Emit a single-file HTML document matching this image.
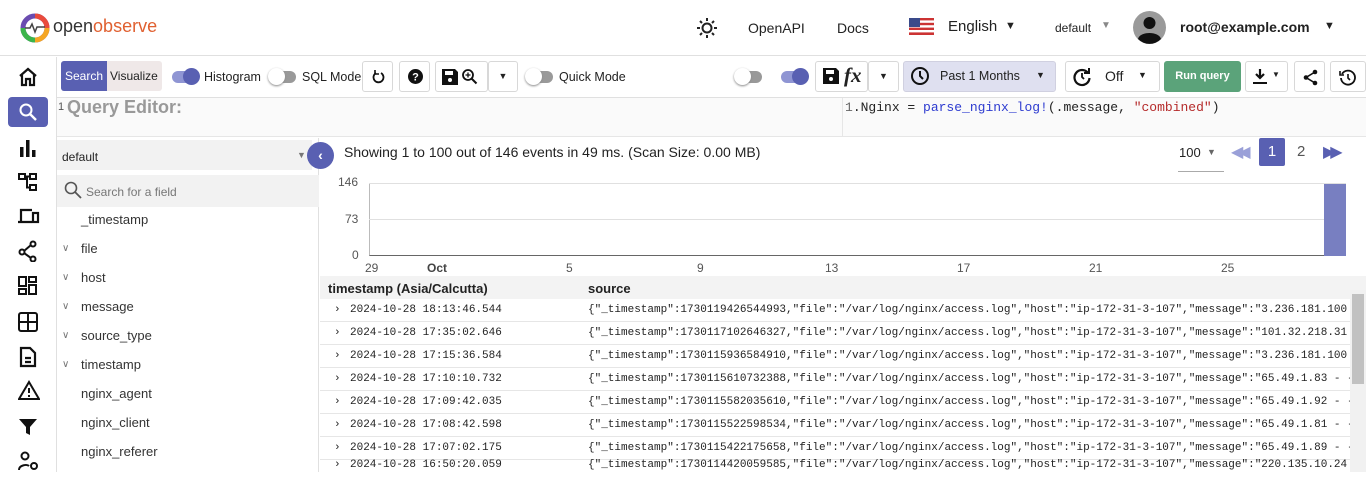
<!DOCTYPE html>
<html><head><meta charset="utf-8"><style>
*{box-sizing:border-box;margin:0;padding:0}
body{width:1366px;height:472px;overflow:hidden;background:#fff;font-family:"Liberation Sans",sans-serif;color:#222;position:relative;font-size:13px}
.abs{position:absolute}
.mono{font-family:"Liberation Mono",monospace}
.btn{position:absolute;top:61px;height:31px;border:1px solid #d8d8d8;border-radius:3px;background:#fff}
.tog{position:absolute;width:26px;height:12px;border-radius:6px}
.knob{position:absolute;width:17px;height:17px;border-radius:50%;top:-3px}
.nav svg{position:absolute;left:18px}
.row{position:absolute;left:320px;width:1030px;height:23px;border-bottom:1px solid #e6e6e6;font-size:11px;font-family:"Liberation Mono",monospace;line-height:22px;color:#222;white-space:nowrap;overflow:hidden}
.row span{position:absolute}
.fld{position:absolute;left:81px;font-size:13px;color:#333}
.chev{position:absolute;left:62px;font-size:10px;color:#777}
</style></head><body>
<div class="abs" style="left:0;top:0;width:1366px;height:56px;border-bottom:1px solid #e0e0e0"></div>
<svg class="abs" style="left:20px;top:13px" width="30" height="30" viewBox="0 0 30 30"><circle cx="15" cy="15" r="12" fill="none" stroke="#6a4cb0" stroke-width="5"/><path d="M15 3 A12 12 0 0 1 27 15" stroke="#e94b3c" stroke-width="5" fill="none"/><path d="M27 15 A12 12 0 0 1 15 27" stroke="#f5a623" stroke-width="5" fill="none"/><path d="M15 27 A12 12 0 0 1 3 15" stroke="#3bb54a" stroke-width="5" fill="none"/><path d="M5 15h5l2-4 3 8 2-5h8" stroke="#444" stroke-width="1.5" fill="none"/></svg>
<div class="abs" style="left:53px;top:16px;font-size:18px;letter-spacing:0px"><span style="color:#333">open</span><span style="color:#e06030">observe</span></div>
<svg class="abs" style="left:696px;top:17px" width="22" height="22" viewBox="0 0 22 22"><circle cx="11" cy="11" r="4.5" fill="none" stroke="#222" stroke-width="2"/><g stroke="#222" stroke-width="2"><path d="M11 1v3M11 18v3M1 11h3M18 11h3M4 4l2 2M16 16l2 2M4 18l2-2M16 6l2-2"/></g></svg>
<div class="abs" style="left:748px;top:20px;font-size:14px">OpenAPI</div>
<div class="abs" style="left:837px;top:20px;font-size:14px">Docs</div>
<svg class="abs" style="left:909px;top:18px" width="25" height="17" viewBox="0 0 25 17"><rect width="25" height="17" fill="#c33"/><g fill="#fff"><rect y="2.4" width="25" height="2.4"/><rect y="7.2" width="25" height="2.4"/><rect y="12" width="25" height="2.4"/></g><rect width="11" height="9" fill="#3a4a8a"/></svg>
<div class="abs" style="left:948px;top:18px;font-size:15px">English</div>
<div class="abs" style="left:1005px;top:20px;font-size:11px">▼</div>
<div class="abs" style="left:1055px;top:21px;font-size:12px">default</div>
<div class="abs" style="left:1101px;top:20px;font-size:10px;color:#888">▼</div>
<svg class="abs" style="left:1133px;top:11px" width="33" height="33" viewBox="0 0 33 33"><circle cx="16.5" cy="16.5" r="16.5" fill="#9a9a9a"/><circle cx="16.5" cy="12" r="6" fill="#111"/><path d="M5 28c2-8 21-8 23 0a16 16 0 0 1-23 0z" fill="#111"/></svg>
<div class="abs" style="left:1180px;top:19px;font-size:14px;font-weight:bold">root@example.com</div>
<div class="abs" style="left:1324px;top:20px;font-size:11px">▼</div>

<div class="abs" style="left:56px;top:57px;width:1px;height:415px;background:#e0e0e0"></div>
<div class="abs" style="left:8px;top:97px;width:40px;height:30px;background:#5960b2;border-radius:4px"></div>
<div class="nav">
<svg style="top:67px" width="20" height="20" viewBox="0 0 20 20"><path d="M2 9L10 2l8 7M4 8v10h4v-6h4v6h4V8" fill="none" stroke="#111" stroke-width="2.2"/></svg>
<svg style="top:102px" width="20" height="20" viewBox="0 0 20 20"><circle cx="8" cy="8" r="5.5" fill="none" stroke="#fff" stroke-width="2"/><path d="M12 12l6 6" stroke="#fff" stroke-width="2.4"/></svg>
<svg style="top:138px" width="20" height="20" viewBox="0 0 20 20"><rect x="2" y="9" width="3.5" height="10" fill="#111"/><rect x="8" y="2" width="3.5" height="17" fill="#111"/><rect x="14" y="12" width="3.5" height="7" fill="#111"/></svg>
<svg style="top:172px" width="20" height="20" viewBox="0 0 20 20"><g fill="none" stroke="#111" stroke-width="2"><rect x="1" y="2" width="6" height="5"/><rect x="12" y="2" width="6" height="5"/><rect x="12" y="13" width="6" height="5"/><path d="M7 4.5h5M9 4.5v11h3"/></g></svg>
<svg style="top:206px" width="22" height="20" viewBox="0 0 22 20"><g fill="none" stroke="#111" stroke-width="2.2"><path d="M3 15V4h11M0 16h14"/><rect x="15" y="7" width="5" height="9"/></g></svg>
<svg style="top:240px" width="20" height="22" viewBox="0 0 20 22"><g fill="none" stroke="#111" stroke-width="2"><circle cx="4" cy="12" r="2.5"/><circle cx="15" cy="4" r="2.5"/><circle cx="15" cy="19" r="2.5"/><path d="M6 11l7-6M6 13l7 5"/></g></svg>
<svg style="top:276px" width="20" height="20" viewBox="0 0 20 20"><g fill="none" stroke="#111" stroke-width="2"><rect x="1" y="1" width="7" height="9"/><rect x="11" y="1" width="7" height="5"/><rect x="1" y="13" width="7" height="5"/><rect x="11" y="9" width="7" height="9"/></g></svg>
<svg style="top:312px" width="20" height="20" viewBox="0 0 20 20"><g fill="none" stroke="#111" stroke-width="2"><rect x="1" y="1" width="18" height="18" rx="2"/><path d="M10 1v18M1 10h18"/></g></svg>
<svg style="top:346px" width="20" height="22" viewBox="0 0 20 22"><g fill="none" stroke="#111" stroke-width="2.2"><path d="M3 2h9l5 5v13H3z"/><path d="M7 12h6M7 16h6"/></g></svg>
<svg style="top:380px" width="22" height="20" viewBox="0 0 22 20"><g fill="none" stroke="#111" stroke-width="2"><path d="M11 2L1 19h20z"/><path d="M11 8v5M11 15v2"/></g></svg>
<svg style="top:417px" width="20" height="20" viewBox="0 0 20 20"><path d="M1 2h18l-7 8v8l-4-2v-6z" fill="#111"/></svg>
<svg style="top:450px" width="22" height="22" viewBox="0 0 22 22"><g fill="none" stroke="#111" stroke-width="2"><circle cx="7" cy="6" r="3.5"/><path d="M1 20c0-5 8-6 10-4"/><circle cx="16" cy="16" r="3"/></g></svg>
</div>

<div class="abs" style="left:57px;top:97px;width:1309px;height:1px;background:#e0e0e0"></div>
<div class="abs" style="left:61px;top:61px;width:101px;height:30px;background:#efe8e8;border-radius:3px"></div>
<div class="abs" style="left:61px;top:61px;width:46px;height:30px;background:#5960b2;border-radius:3px 0 0 3px;color:#fff;font-size:12px;line-height:30px;text-align:center">Search</div>
<div class="abs" style="left:110px;top:69px;font-size:12px">Visualize</div>
<div class="tog" style="left:172px;top:71px;background:#8f95d3"><div class="knob" style="left:11px;background:#5960b2"></div></div>
<div class="abs" style="left:204px;top:70px;font-size:12.5px">Histogram</div>
<div class="tog" style="left:270px;top:71px;background:#999"><div class="knob" style="left:-2px;background:#fff;box-shadow:0 1px 2px #888"></div></div>
<div class="abs" style="left:302px;top:70px;font-size:12.5px">SQL Mode</div>
<div class="btn" style="left:362px;width:31px"><svg style="position:absolute;left:9px;top:8px" width="13" height="14" viewBox="0 0 13 14"><path d="M4 3A5 5 0 1 0 9 3" fill="none" stroke="#111" stroke-width="1.8"/><path d="M3 0v4h4" fill="none" stroke="#111" stroke-width="1.6"/></svg></div>
<div class="btn" style="left:399px;width:31px"><svg style="position:absolute;left:8px;top:7px" width="15" height="15" viewBox="0 0 15 15"><circle cx="7.5" cy="7.5" r="7.5" fill="#111"/><text x="7.5" y="11.5" font-size="11" font-weight="bold" fill="#fff" text-anchor="middle" font-family="Liberation Sans">?</text></svg></div>
<div class="btn" style="left:435px;width:53px"><svg style="position:absolute;left:6px;top:7px" width="16" height="16" viewBox="0 0 16 16"><path d="M0 0h13l3 3v13H0z" fill="#111"/><rect x="3" y="2" width="8" height="4" fill="#fff"/><circle cx="8" cy="11" r="2" fill="#fff"/></svg><svg style="position:absolute;left:25px;top:6px" width="17" height="17" viewBox="0 0 17 17"><circle cx="7" cy="7" r="5" fill="none" stroke="#111" stroke-width="1.8"/><path d="M10.5 10.5l5 5" stroke="#111" stroke-width="2"/><path d="M7 4.5v5M4.5 7h5" stroke="#111" stroke-width="1.3"/></svg></div>
<div class="btn" style="left:488px;width:30px;font-size:9px;text-align:center;line-height:29px">▼</div>
<div class="tog" style="left:527px;top:71px;background:#999"><div class="knob" style="left:-2px;background:#fff;box-shadow:0 1px 2px #888"></div></div>
<div class="abs" style="left:559px;top:70px;font-size:12.5px">Quick Mode</div>

<div class="tog" style="left:736px;top:71px;background:#999"><div class="knob" style="left:-2px;background:#fff;box-shadow:0 1px 2px #888"></div></div>
<div class="tog" style="left:781px;top:71px;background:#8f95d3"><div class="knob" style="left:11px;background:#5960b2"></div></div>
<div class="btn" style="left:815px;width:53px"><svg style="position:absolute;left:7px;top:6px" width="16" height="16" viewBox="0 0 16 16"><path d="M0 0h13l3 3v13H0z" fill="#111"/><rect x="3" y="2" width="8" height="4" fill="#fff"/><circle cx="8" cy="11" r="2" fill="#fff"/></svg><span style="position:absolute;left:28px;top:1px;font-family:'Liberation Serif',serif;font-style:italic;font-size:21px;font-weight:bold">fx</span></div>
<div class="btn" style="left:868px;width:31px;font-size:9px;text-align:center;line-height:29px">▼</div>
<div class="abs" style="left:903px;top:61px;width:153px;height:31px;background:#dfe0f0;border:1px solid #d0d0e0;border-radius:3px"></div>
<svg class="abs" style="left:910px;top:66px" width="20" height="20" viewBox="0 0 20 20"><circle cx="10" cy="10" r="8" fill="none" stroke="#111" stroke-width="2"/><path d="M10 5v5l3 3" fill="none" stroke="#111" stroke-width="2"/></svg>
<div class="abs" style="left:940px;top:69px;font-size:12.5px">Past 1 Months</div>
<div class="abs" style="left:1036px;top:70px;font-size:9px">▼</div>
<div class="btn" style="left:1065px;width:95px"><svg style="position:absolute;left:6px;top:5px" width="20" height="20" viewBox="0 0 20 20"><path d="M16 6A7.5 7.5 0 1 0 17.5 11" fill="none" stroke="#111" stroke-width="2.2"/><path d="M12 6h5V1" fill="none" stroke="#111" stroke-width="2"/><path d="M10 6v4l2 2" fill="none" stroke="#111" stroke-width="1.8"/></svg><span style="position:absolute;left:39px;top:6px;font-size:14px">Off</span><span style="position:absolute;left:72px;top:8px;font-size:9px">▼</span></div>
<div class="abs" style="left:1164px;top:61px;width:77px;height:31px;background:#5ba37a;border-radius:3px;color:#fff;font-size:11px;font-weight:bold;line-height:31px;text-align:center">Run query</div>
<div class="btn" style="left:1245px;width:43px"><svg style="position:absolute;left:7px;top:7px" width="14" height="16" viewBox="0 0 14 16"><path d="M7 0v9M3 5l4 4 4-4" fill="none" stroke="#111" stroke-width="2.2"/><path d="M0 14h14" stroke="#111" stroke-width="2"/></svg><span style="position:absolute;left:26px;top:8px;font-size:8px">▼</span></div>
<div class="btn" style="left:1294px;width:31px"><svg style="position:absolute;left:8px;top:7px" width="15" height="17" viewBox="0 0 15 17"><circle cx="12" cy="3" r="2.3" fill="#111"/><circle cx="3" cy="8.5" r="2.3" fill="#111"/><circle cx="12" cy="14" r="2.3" fill="#111"/><path d="M12 3L3 8.5 12 14" fill="none" stroke="#111" stroke-width="1.6"/></svg></div>
<div class="btn" style="left:1330px;width:36px"><svg style="position:absolute;left:8px;top:7px" width="17" height="17" viewBox="0 0 17 17"><path d="M3 5A7 7 0 1 1 2 9" fill="none" stroke="#111" stroke-width="1.8"/><path d="M1 2v4h4" fill="none" stroke="#111" stroke-width="1.6"/><path d="M9 5v4l2 2" fill="none" stroke="#111" stroke-width="1.6"/></svg></div>

<div class="abs" style="left:57px;top:98px;width:1309px;height:39px;background:#fafafa;border-bottom:1px solid #e6e6e6"></div>
<div class="abs" style="left:842px;top:98px;width:1px;height:39px;background:#e6e6e6"></div>
<div class="abs" style="left:58px;top:101px;font-size:11px;color:#555">1</div>
<div class="abs" style="left:67px;top:97px;font-size:18px;font-weight:bold;color:#999">Query Editor:</div>
<div class="abs mono" style="left:845px;top:100px;font-size:13px;color:#222"><span style="color:#666">1</span>.Nginx = <span style="color:#2d3bd0">parse_nginx_log!</span>(.message, <span style="color:#b52a2a">"combined"</span>)</div>

<div class="abs" style="left:57px;top:138px;width:262px;height:334px;background:#fff;border-right:1px solid #e0e0e0"></div>
<div class="abs" style="left:57px;top:140px;width:255px;height:30px;background:#f2f2f2"></div>
<div class="abs" style="left:62px;top:150px;font-size:12px">default</div>
<div class="abs" style="left:297px;top:150px;font-size:9px;color:#777">▼</div>
<div class="abs" style="left:307px;top:142px;width:27px;height:27px;border-radius:50%;background:#5960b2;color:#fff;font-size:14px;font-weight:bold;text-align:center;line-height:26px">‹</div>
<div class="abs" style="left:57px;top:175px;width:262px;height:32px;background:#f2f2f2"></div>
<svg class="abs" style="left:64px;top:181px" width="18" height="18" viewBox="0 0 18 18"><circle cx="7" cy="7" r="5.5" fill="none" stroke="#555" stroke-width="1.6"/><path d="M11 11l6 6" stroke="#555" stroke-width="1.8"/></svg>
<div class="abs" style="left:86px;top:185px;font-size:12px;color:#777">Search for a field</div>
<div class="fld" style="top:212px">_timestamp</div>
<div class="chev" style="top:243px">∨</div><div class="fld" style="top:241px">file</div>
<div class="chev" style="top:272px">∨</div><div class="fld" style="top:270px">host</div>
<div class="chev" style="top:301px">∨</div><div class="fld" style="top:299px">message</div>
<div class="chev" style="top:330px">∨</div><div class="fld" style="top:328px">source_type</div>
<div class="chev" style="top:359px">∨</div><div class="fld" style="top:357px">timestamp</div>
<div class="fld" style="top:386px">nginx_agent</div>
<div class="fld" style="top:415px">nginx_client</div>
<div class="fld" style="top:444px">nginx_referer</div>

<div class="abs" style="left:344px;top:144px;font-size:14px">Showing 1 to 100 out of 146 events in 49 ms. (Scan Size: 0.00 MB)</div>
<div class="abs" style="left:1179px;top:145px;font-size:13px">100</div>
<div class="abs" style="left:1207px;top:147px;font-size:9px;color:#666">▼</div>
<div class="abs" style="left:1178px;top:171px;width:46px;height:1px;background:#aaa"></div>
<div class="abs" style="left:1231px;top:142px;font-size:16px;color:#9aa0d8;letter-spacing:-5px">◀◀</div>
<div class="abs" style="left:1259px;top:138px;width:26px;height:28px;background:#5960b2;border-radius:2px;color:#fff;font-size:15px;text-align:center;line-height:28px">1</div>
<div class="abs" style="left:1297px;top:143px;font-size:15px;color:#555">2</div>
<div class="abs" style="left:1323px;top:142px;font-size:16px;color:#5960b2;letter-spacing:-5px">▶▶</div>

<div class="abs" style="left:369px;top:183px;width:977px;height:73px;border-left:1px solid #bbb;border-bottom:1px solid #666"></div>
<div class="abs" style="left:369px;top:183px;width:977px;height:1px;background:#e0e0e0"></div>
<div class="abs" style="left:369px;top:219px;width:977px;height:1px;background:#e0e0e0"></div>
<div class="abs" style="left:1324px;top:184px;width:22px;height:72px;background:#787fc1"></div>
<div class="abs" style="left:338px;top:175px;font-size:12px;color:#555">146</div>
<div class="abs" style="left:345px;top:212px;font-size:12px;color:#555">73</div>
<div class="abs" style="left:352px;top:248px;font-size:12px;color:#555">0</div>
<div class="abs" style="left:365px;top:261px;font-size:12px;color:#555">29</div>
<div class="abs" style="left:427px;top:261px;font-size:12px;color:#444;font-weight:bold">Oct</div>
<div class="abs" style="left:566px;top:261px;font-size:12px;color:#555">5</div>
<div class="abs" style="left:697px;top:261px;font-size:12px;color:#555">9</div>
<div class="abs" style="left:825px;top:261px;font-size:12px;color:#555">13</div>
<div class="abs" style="left:957px;top:261px;font-size:12px;color:#555">17</div>
<div class="abs" style="left:1089px;top:261px;font-size:12px;color:#555">21</div>
<div class="abs" style="left:1221px;top:261px;font-size:12px;color:#555">25</div>

<div class="abs" style="left:320px;top:276px;width:1046px;height:23px;background:#f3f3f3"></div>
<div class="abs" style="left:328px;top:281px;font-size:13px;font-weight:bold;color:#222">timestamp (Asia/Calcutta)</div>
<div class="abs" style="left:588px;top:281px;font-size:13px;font-weight:bold;color:#222">source</div>
<div class="abs" style="left:1350px;top:290px;width:16px;height:182px;background:#f1f1f1"></div>
<div class="abs" style="left:1352px;top:294px;width:12px;height:90px;background:#c1c1c1"></div>

<div class="row" style="top:299px"><span style="left:14px">›</span><span style="left:30px">2024-10-28 18:13:46.544</span><span style="left:268px">{"_timestamp":1730119426544993,"file":"/var/log/nginx/access.log","host":"ip-172-31-3-107","message":"3.236.181.100 - -</span></div>
<div class="row" style="top:322px"><span style="left:14px">›</span><span style="left:30px">2024-10-28 17:35:02.646</span><span style="left:268px">{"_timestamp":1730117102646327,"file":"/var/log/nginx/access.log","host":"ip-172-31-3-107","message":"101.32.218.31 - -</span></div>
<div class="row" style="top:345px"><span style="left:14px">›</span><span style="left:30px">2024-10-28 17:15:36.584</span><span style="left:268px">{"_timestamp":1730115936584910,"file":"/var/log/nginx/access.log","host":"ip-172-31-3-107","message":"3.236.181.100 - -</span></div>
<div class="row" style="top:368px"><span style="left:14px">›</span><span style="left:30px">2024-10-28 17:10:10.732</span><span style="left:268px">{"_timestamp":1730115610732388,"file":"/var/log/nginx/access.log","host":"ip-172-31-3-107","message":"65.49.1.83 - - [</span></div>
<div class="row" style="top:391px"><span style="left:14px">›</span><span style="left:30px">2024-10-28 17:09:42.035</span><span style="left:268px">{"_timestamp":1730115582035610,"file":"/var/log/nginx/access.log","host":"ip-172-31-3-107","message":"65.49.1.92 - - [</span></div>
<div class="row" style="top:414px"><span style="left:14px">›</span><span style="left:30px">2024-10-28 17:08:42.598</span><span style="left:268px">{"_timestamp":1730115522598534,"file":"/var/log/nginx/access.log","host":"ip-172-31-3-107","message":"65.49.1.81 - - [</span></div>
<div class="row" style="top:437px"><span style="left:14px">›</span><span style="left:30px">2024-10-28 17:07:02.175</span><span style="left:268px">{"_timestamp":1730115422175658,"file":"/var/log/nginx/access.log","host":"ip-172-31-3-107","message":"65.49.1.89 - - [</span></div>
<div class="row" style="top:454px;border:none"><span style="left:14px">›</span><span style="left:30px">2024-10-28 16:50:20.059</span><span style="left:268px">{"_timestamp":1730114420059585,"file":"/var/log/nginx/access.log","host":"ip-172-31-3-107","message":"220.135.10.24 - -</span></div>
</body></html>
